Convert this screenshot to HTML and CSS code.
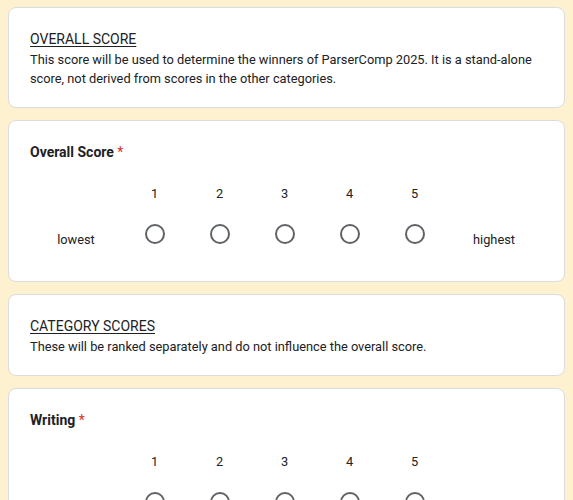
FILE: index.html
```html
<!DOCTYPE html>
<html lang="en">
<head>
    <meta charset="UTF-8">
    <meta name="viewport" content="width=device-width, initial-scale=1.0">
    <title>ParserComp 2025 - Voting</title>
    <link rel="stylesheet" href="styles.css">
</head>
<body>
<div class="form">
    <div class="card section">
        <div class="section-title">OVERALL SCORE</div>
        <div class="section-desc">This score will be used to determine the winners of ParserComp 2025. It is a stand-alone score, not derived from scores in the other categories.</div>
    </div>

    <div class="card question">
        <div class="question-title">Overall Score <span class="required">*</span></div>
        <div class="scale">
            <div></div>
            <div class="num">1</div>
            <div class="num">2</div>
            <div class="num">3</div>
            <div class="num">4</div>
            <div class="num">5</div>
            <div></div>
            <div class="end-label">lowest</div>
            <div class="radio-cell"><span class="radio"></span></div>
            <div class="radio-cell"><span class="radio"></span></div>
            <div class="radio-cell"><span class="radio"></span></div>
            <div class="radio-cell"><span class="radio"></span></div>
            <div class="radio-cell"><span class="radio"></span></div>
            <div class="end-label">highest</div>
        </div>
    </div>

    <div class="card section">
        <div class="section-title">CATEGORY SCORES</div>
        <div class="section-desc">These will be ranked separately and do not influence the overall score.</div>
    </div>

    <div class="card question">
        <div class="question-title">Writing <span class="required">*</span></div>
        <div class="scale">
            <div></div>
            <div class="num">1</div>
            <div class="num">2</div>
            <div class="num">3</div>
            <div class="num">4</div>
            <div class="num">5</div>
            <div></div>
            <div class="end-label">lowest</div>
            <div class="radio-cell"><span class="radio"></span></div>
            <div class="radio-cell"><span class="radio"></span></div>
            <div class="radio-cell"><span class="radio"></span></div>
            <div class="radio-cell"><span class="radio"></span></div>
            <div class="radio-cell"><span class="radio"></span></div>
            <div class="end-label">highest</div>
        </div>
    </div>
</div>
</body>
</html>
```

FILE: styles.css
```css
body {
    font-family: Roboto, Arial, sans-serif;
    font-size: 12.8px;
    color: #202124;
    background-color: #fdf1cf;
    margin: 0;
    padding: 7px 8px;
    overflow: hidden;
}
.card {
    background-color: #fff;
    border: 1px solid #dadce0;
    border-radius: 8px;
    margin-bottom: 12px;
    padding: 20px 21px 19px;
}
.section-title {
    line-height: 22px;
    font-size: 14px;
    text-decoration: underline;
    text-underline-offset: 2px;
}
.section-desc {
    line-height: 19px;
}
.question {
    padding-bottom: 31px;
}
.question-title {
    font-size: 14px;
    font-weight: 700;
    line-height: 22px;
}
.required {
    color: #d93025;
    font-weight: 400;
}
.scale {
    display: grid;
    grid-template-columns: 92px repeat(5, 65px) 94px;
    row-gap: 20px;
    margin-top: 21px;
}
.num {
    text-align: center;
    line-height: 20px;
}
.radio-cell {
    display: flex;
    justify-content: center;
    height: 20px;
}
.radio {
    width: 16px;
    height: 16px;
    border: 2px solid #5f6368;
    border-radius: 50%;
}
.end-label {
    text-align: center;
    line-height: 20px;
    padding-top: 6px;
}
```
